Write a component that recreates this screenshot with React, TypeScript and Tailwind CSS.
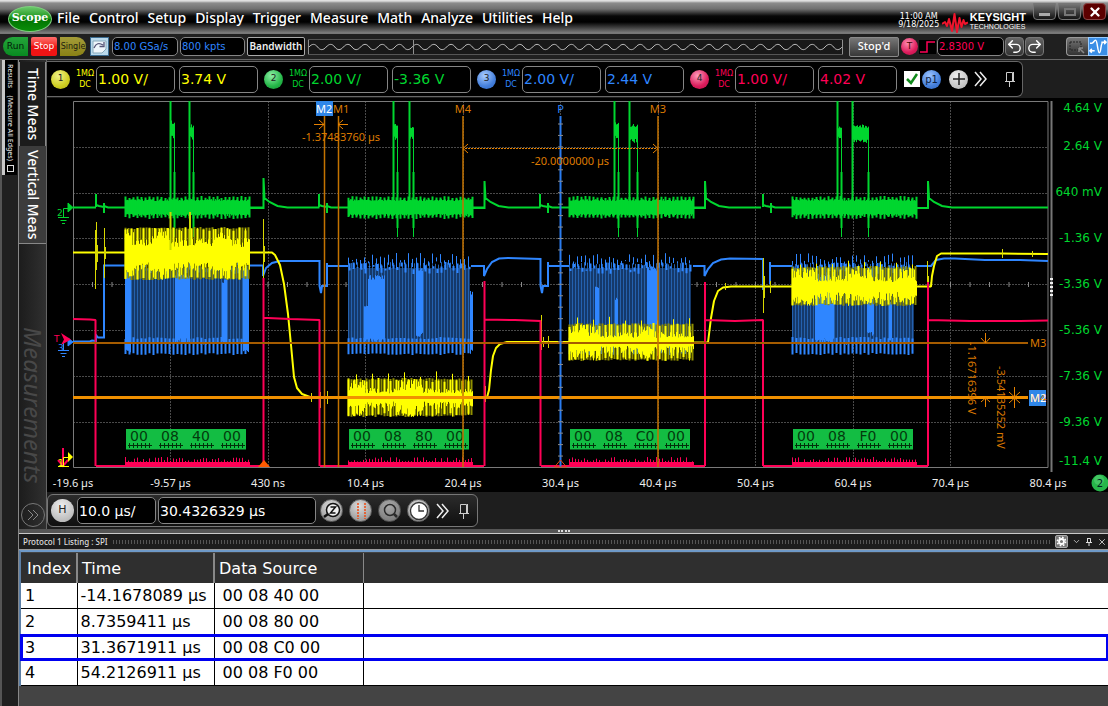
import { ChevronDown, Redo2, Undo2, X } from "lucide-react";

const MENUS = ["File", "Control", "Setup", "Display", "Trigger", "Measure", "Math", "Analyze", "Utilities", "Help"];

const CHANNELS = [
  { id: "1", scale: "1.00 V/", offset: "3.74 V", text: "text-[#ffff00]", badge: "bg-[radial-gradient(circle_at_40%_30%,#f2f28a,#cfcf22_60%,#b0b010)]" },
  { id: "2", scale: "2.00 V/", offset: "-3.36 V", text: "text-[#00d62f]", badge: "bg-[radial-gradient(circle_at_40%_30%,#8ff0a8,#25b648_60%,#119030)]" },
  { id: "3", scale: "2.00 V/", offset: "2.44 V", text: "text-[#2f86ff]", badge: "bg-[radial-gradient(circle_at_40%_30%,#a9ccff,#4580dc_60%,#2f68c4)]" },
  { id: "4", scale: "1.00 V/", offset: "4.02 V", text: "text-[#ff0056]", badge: "bg-[radial-gradient(circle_at_40%_30%,#ff9dbc,#dc1c5c_60%,#b80f48)]" },
];

const LISTING = [
  { index: 1, time: "-14.1678089 µs", data: "00 08 40 00" },
  { index: 2, time: "8.7359411 µs", data: "00 08 80 00" },
  { index: 3, time: "31.3671911 µs", data: "00 08 C0 00" },
  { index: 4, time: "54.2126911 µs", data: "00 08 F0 00" },
];

const TIMES = ["-19.6 µs", "-9.57 µs", "430 ns", "10.4 µs", "20.4 µs", "30.4 µs", "40.4 µs", "50.4 µs", "60.4 µs", "70.4 µs", "80.4 µs"];
const VOLTS = ["4.64 V", "2.64 V", "640 mV", "-1.36 V", "-3.36 V", "-5.36 V", "-7.36 V", "-9.36 V", "-11.4 V"];
const VOLT_Y = [112, 150, 196, 242, 288, 334, 380, 426, 465];

/* ---------- waveforms ---------- */

const LEFT = 73;
const RIGHT = 1048;
const TOP = 101;
const BOTTOM = 467;
const GRID_X = Array.from({ length: 11 }, (_, i) => LEFT + i * 97.5);
const GRID_Y = Array.from({ length: 9 }, (_, i) => TOP + i * 45.8);

// small fixed-seed generator so the noise is the same on each render
function noise(seed: number) {
  let s = seed;
  return () => {
    s = (s * 16807) % 2147483647;
    return s / 2147483647;
  };
}

// vertical strokes from x0 to x1, each end wandering by `jitter`
function comb(x0: number, x1: number, step: number, top: number, bottom: number, jitter: number, seed: number) {
  const rnd = noise(seed);
  rnd();
  let d = "";
  for (let x = x0; x <= x1; x += step) {
    const a = top + rnd() * jitter;
    const b = bottom - rnd() * jitter;
    d += `M${x + 0.5} ${a.toFixed(1)}V${b.toFixed(1)}`;
  }
  return d;
}

const PACKETS = [
  {
    x: 125, bytes: ["00", "08", "40", "00"], yellow: [227, 280, 238, 271],
    bright: [[125, 130], [152, 170], [215, 228]],
    bands: [[125, 130, 270, 354], [175, 189, 272, 343], [222, 226, 278, 345], [243, 248, 265, 354]],
    pulses: [[170, 4, 120, 139], [189, 4, 124, 140]],
  },
  {
    x: 348, bytes: ["00", "08", "80", "00"], yellow: [378, 417, 388, 409],
    bright: [[348, 364], [396, 422]],
    bands: [[364, 368, 305, 343], [368, 384, 275, 343], [416, 422, 268, 337], [470, 472, 290, 354]],
    pulses: [[393, 4, 122, 140], [409, 4, 124, 140]],
  },
  {
    x: 569, bytes: ["00", "08", "C0", "00"], yellow: [323, 361, 331, 353],
    bright: [[569, 598], [638, 652]],
    bands: [[595, 598, 285, 343], [615, 617, 295, 343], [647, 657, 266, 343]],
    pulses: [[614, 4, 122, 139], [629, 8, 123, 143]],
  },
  {
    x: 792, bytes: ["00", "08", "F0", "00"], yellow: [266, 306, 275, 301],
    bright: [[792, 814], [848, 872], [900, 914]],
    bands: [[815, 818, 290, 343], [818, 833, 272, 343], [867, 873, 266, 337], [889, 891, 300, 343]],
    pulses: [[837, 4, 126, 140], [852, 16, 124, 143]],
  },
];

const GREEN = PACKETS.map(({ x }) => `M${x - 29} 207V194V205L${x - 26} 206L${x - 21} 207V203V213V206L${x - 17} 207.5H${x}`).join("");
const GREEN_TAILS = [263.5, 484.5, 705, 928]
  .map((x, i) => `M${x - 15} 208H${x}V${i === 0 ? 178 : 181}L${x + 1} 198L${x + 6} 202L${x + 14} 206L${x + 24} 207.5H${i === 3 ? RIGHT : x + 56}`)
  .join("");

const BLUE_LINE = [
  "M73 341.5H90L92 340.5L96 341V335L98 337.5H104V265.5H125",
  "M249 265.5H263V276L266 268L272 263L280 261H319.5V286L321 293L322 286H327V263V266H348",
  "M471 266H484V276L487 269L492 262L499 258.5L508 258L540.5 259V286L542 293L543 286H548V262V266H569",
  "M693 266H704.5V276L708 269L713 263L721 259.5L730 258.5L763 259V290M770 284V262V266H792",
  "M916 266H928L931 266L936 260L944 258.5L955 258.5L985 260L1020 260L1048 261",
].join("");

const YELLOW_LINE = [
  "M73 252.5H125",
  "M249 252.5H272L275 255L280 265L284 284L288 314L291 345L294 377L297 388L302 394L310 397L320 398H348",
  "M471 397.5H487L489 390L491 370L493 356L496 348L500 344L507 342H569",
  "M693 342.5H708L711 318L714 301L718 291L723 287.5L731 286.5H792",
  "M916 286.5H931L932 276L934 266L937 256L941 253.5H1002L1048 254",
].join("");

// one-pixel glitches riding on the yellow trace
const YELLOW_SPIKES = [
  "M95.5 289V230M96.5 222V270M97.5 245V262M104.5 228V278M105.5 247V259",
  "M263.5 219V278M264.5 246V262M311.5 393V402M319.5 390V426M320.5 392V408M327.5 391V404",
  "M485.5 386V402M541.5 315V350M543.5 337V347M548.5 336V348",
  "M705.5 316V347M763.5 258V313M764.5 276V298M770.5 281V293",
  "M927.5 261V292M928.5 276V289M1002.5 249V258M1032.5 251V257M725.5 283V290",
].join("");

const RED_LINE = [
  "M73 319L90 319.5L95.5 320V340V466",
  "M263.5 466V278V330V318L268 318L290 319L319.5 320V466",
  "M484.5 466V281V330V319.5L515 320L540.5 321V466",
  "M705 466V282V330V320L735 321L763 320V466",
  "M928 466V282V330V320L970 321H1020L1048 320.5",
].join("");

function Packet({ packet, n }: { packet: (typeof PACKETS)[number]; n: number }) {
  const { x, yellow: y } = packet;
  const end = x + 124;
  const mid = (y[0] + y[1]) / 2;
  const seed = 97711 * (n + 1);
  return (
    <g fill="none" strokeWidth="1">
      <rect x={x} y="268" width="122" height="74" fill="#15396a" />
      <path d={comb(x, end - 2, 3, 262, 345, 3, seed)} stroke="#2461ae" />
      <path d={comb(x, end - 2, 4, 253, 270, 9, seed + 1)} stroke="#2f86ff" strokeWidth="1" />
      <path d={comb(x + 1, end - 2, 4, 262, 274, 8, seed + 6)} stroke="#2f86ff" strokeWidth="2" />
      <path d={comb(x, end - 2, 4, 337, 355, 2, seed + 2)} stroke="#2f86ff" strokeWidth="2" />
      {packet.bands.map(([a, b, t, u]) => (
        <path key={a} d={comb(a, b, 1, t, u, 5, seed + a)} stroke="#2f86ff" />
      ))}
      <path d={comb(x, end, 1, 199, 216, 2, seed + 3)} stroke="#00d62f" />
      <path d={comb(x, end, 4, 196, 219, 2, seed + 4)} stroke="#00d62f" strokeWidth="2" />
      {packet.pulses.map(([px, w, t, u]) => (
        <g key={px} stroke="#00d62f">
          <path d={`M${px + 0.5} ${TOP}V215`} strokeWidth="2" />
          <path d={comb(px, px + w, 1, t, u, 4, seed + px)} />
          <path d={`M${px + w + 0.5} 132V237`} />
          <path d={`M${px + w + 0.5} 172V228`} strokeWidth="2" />
        </g>
      ))}
      <path d={comb(x, end, 3, y[0], y[1], 2, seed + 5)} stroke="#8f8f00" strokeWidth="2" />
      <path d={comb(x, end, 6, y[0], y[1], 4, seed + 7)} stroke="#ffff00" strokeWidth="2" />
      {packet.bright.map(([a, b]) => (
        <path key={a} d={comb(a, b, 1, y[0] + 1, y[1], 12, seed + a)} stroke="#ffff00" />
      ))}
      <path d={comb(x, end, 1, y[2], y[3], 9, seed + 8)} stroke="#ffff00" />
      <path d={comb(x, end, 1, mid - 6, mid + 6, 2, seed + 11)} stroke="#ffff00" />
      <path d={comb(x + 8, end, 16, y[0] - (n ? 7 : 0), y[1], 6, seed + 9)} stroke="#ffff00" />
      <path d={comb(x, end, 1, 462, 467, 0, seed)} stroke="#ff0056" />
      <path d={comb(x, end, 3, 457, 467, 5, seed + 10)} stroke="#ff0056" />
      <rect x={x + 1} y="429" width="120" height="20.500" fill="#13bd43" />
      {packet.bytes.map((b, i) => (
        <g key={i}>
          <text x={x + 14 + i * 31} y="441" textAnchor="middle" fontSize="14" fill="#033a0d">{b}</text>
          <path d={`M${x + 3 + i * 31} 445.500h24`} stroke="#02300a" />
          <path d={comb(x + 4 + i * 31, x + 25 + i * 31, 4, 443, 448, 0, 1)} stroke="#02300a" />
        </g>
      ))}
    </g>
  );
}

function Scope() {
  return (
    <svg viewBox="47 98 1061 394" className="block w-full bg-black" fontFamily="'DejaVu Sans', Verdana, sans-serif" role="img" aria-label="Waveform display">
      <g stroke="#4a4a4a" strokeWidth="1" fill="none">
        {GRID_X.slice(1, -1).map((x) => <path key={x} d={`M${Math.floor(x) + 0.5} ${TOP}V${BOTTOM}`} strokeDasharray="2 1" />)}
        {GRID_Y.slice(1, -1).map((y) => <path key={y} d={`M${LEFT} ${Math.round(y) + 0.5}H${RIGHT}`} strokeDasharray="2 1" />)}
        <path d={`M${LEFT + 0.5} ${TOP}.5H${RIGHT}V${BOTTOM}.5H${LEFT + 0.5}Z`} stroke="#7a7a7a" />
        <path d={comb(92, 1046, 19.5, 282, 287, 0, 1)} stroke="#8a8a8a" />
      </g>
      <path d="M1051.5 101V472" stroke="#777" strokeWidth="2" />
      <path d="M1051.5 278V296" stroke="#eee" strokeWidth="3" strokeDasharray="2 2" />

      <path d={BLUE_LINE} fill="none" stroke="#2f86ff" strokeWidth="2" />
      <path d={GREEN + GREEN_TAILS} fill="none" stroke="#00d62f" strokeWidth="2" />
      <path d="M73 207.5H96M249 207.5H263M471 207.5H484M693 207.5H705M916 208H928" stroke="#00d62f" strokeWidth="2" />
      {PACKETS.map((p, i) => <Packet key={p.x} packet={p} n={i} />)}
      <path d={YELLOW_LINE} fill="none" stroke="#ffff00" strokeWidth="2" strokeLinejoin="bevel" />
      <path d={YELLOW_SPIKES} stroke="#d8d800" />
      <path d="M170.500 212V250M190 212V245" stroke="#c8d800" strokeWidth="2" />
      <path d={RED_LINE} fill="none" stroke="#ff0056" strokeWidth="2" strokeLinejoin="bevel" />
      <path d="M96 466H125M249 466H263M320 466H348M473 466H484M541 466H569M693 466H705M763 466H792M916 466H928" stroke="#ff0056" strokeWidth="2" />

      {/* cursors */}
      <g stroke="#a65c00" fill="none">
        <path d="M73 343H1028" strokeWidth="2" />
        <path d="M324.500 116V467M338.500 116V467M463 116V467M658 116V467" stroke="#c47300" strokeWidth="1.500" />
        <path d="M73 397.500H1028" stroke="#f09000" strokeWidth="3" />
      </g>
      <path d="M560.500 116V467" stroke="#2a7cf0" strokeWidth="2" />
      <path d={Array.from({ length: 30 }, (_, i) => `M558 ${124 + i * 11.45}h5`).join("")} stroke="#8a8a8a" />
      <g stroke="#e88200" fill="none" strokeWidth="1">
        <path d="M465 148.500H657" strokeDasharray="2 1" />
        <path d="M468 144L463 148.500L468 153M653 144L658 148.500L653 153" />
        <path d="M314 124.500H324M319 120L324 124.500L319 129M348 124.500H338M343 120L338 124.500L343 129" />
        <path d="M985.500 333V343M981 338L985.500 343L990 338M985.500 407V398M981 402L985.500 398L990 402" />
        <path d="M1014.500 387V408M1009 392L1014.500 397L1020 392M1009 403L1014.500 398L1020 403" />
      </g>
      <path d="M258 467L264 460L270 467Z" fill="#ff5a00" />
      <path d="M554.500 467L560.500 460L566.500 467Z" fill="none" stroke="#e04a10" />
      <rect x="316" y="101" width="17" height="15" fill="#2f86e8" />
      <rect x="1029" y="390" width="17" height="16" fill="#2f86e8" />
      <g fontFamily="'Noto Sans', 'Open Sans', sans-serif" fontSize="11" fill="#dd7a00">
        <text x="333" y="113">M1</text>
        <text x="316" y="113" fill="#fff">M2</text>
        <text x="463" y="113" textAnchor="middle">M4</text>
        <text x="658" y="113" textAnchor="middle">M3</text>
        <text x="560.500" y="113" textAnchor="middle" fill="#2f86ff">P</text>
        <text x="341" y="141" textAnchor="middle">-1.37483760 µs</text>
        <text x="570" y="165" textAnchor="middle">-20.0000000 µs</text>
        <text x="1030" y="347">M3</text>
        <text x="1030" y="402">M4</text>
        <text x="1030" y="402" fill="#fff">M2</text>
        <text transform="translate(968 342) rotate(90)">-1.16716396 V</text>
        <text transform="translate(997 366) rotate(90)">-3.54135252 mV</text>
      </g>

      {/* ground and trigger markers */}
      <g fill="none" strokeWidth="1">
        <g stroke="#00d62f">
          <path d="M63.500 217V208.500H68M58 217.500H69M60.500 220.500H66.500M62 223.500H65" />
          <path d="M68 203L73 207.500L68 212Z" fill="#00d62f" />
        </g>
        <g stroke="#2f86ff">
          <path d="M63.500 350V342M58 350.500H69M60.500 353.500H66.500M62 356.500H65" />
          <path d="M68 338L73 342L68 346Z" fill="#2f86ff" />
        </g>
        <path d="M61 333L71 339.500L61 345L64 339.500Z" fill="#ff0056" />
        <path d="M63 448V464M58 460L63 466L68 460" stroke="#ff0056" strokeWidth="2" />
        <path d="M63.500 466V457.500H68M58 466.500H69" stroke="#ffff00" />
        <path d="M68 452L73 457L68 462Z" fill="#ffff00" />
      </g>
      <g fontSize="9">
        <text x="57" y="216" fill="#00d62f">2</text>
        <text x="58" y="351" fill="#2f86ff">3</text>
        <text x="58" y="466" fill="#ffff00">1</text>
        <text x="54" y="342" fill="#ff0056">T</text>
      </g>

      {/* scales */}
      <g fontSize="11" fontFamily="'Noto Sans', 'Open Sans', sans-serif" fill="#eee">
        {TIMES.map((t, i) => (
          <text key={t} x={GRID_X[i]} y="487" textAnchor="middle">{t}</text>
        ))}
      </g>
      <g fontSize="12" fill="#00d62f">
        {VOLTS.map((v, i) => (
          <text key={v} x="1102" y={VOLT_Y[i]} textAnchor="end">{v}</text>
        ))}
      </g>
      <circle cx="1100" cy="483" r="8.500" fill="#27b64a" />
      <circle cx="1099" cy="480" r="5" fill="#5fd57c" opacity="0.500" />
      <text x="1100" y="487" fontSize="10" textAnchor="middle" fill="#022">2</text>
    </svg>
  );
}

/* ---------- small pieces ---------- */

function Field({ label, value, className }: { label: string; value: string; className: string }) {
  return (
    <input
      aria-label={label}
      defaultValue={value}
      className={`rounded-[5px] border border-[#858585] bg-black px-px outline-none ${className}`}
    />
  );
}

function More() {
  return (
    <svg viewBox="0 0 14 16" className="h-4 w-3.5" fill="none" stroke="#eee" strokeWidth="1.500">
      <path d="M1 1L7 8L1 15M6 1L12 8L6 15" />
    </svg>
  );
}

function Pin() {
  return (
    <svg viewBox="0 0 12 16" className="h-4 w-3" fill="none" stroke="#ccc">
      <path d="M2.500 1.500H8.500V10.500H2.500ZM9.500 1V10.500M1 10.500H11M5.500 11V16" />
    </svg>
  );
}

function WindowButtons() {
  const base = "flex h-[17px] w-[23px] items-center justify-center rounded-b border border-[#777] bg-linear-to-b from-[#777] to-[#161616]";
  return (
    <div className="mt-[3px] flex gap-0.5 self-start">
      <button className={base} aria-label="Minimize">
        <span className="mt-1.5 h-[3px] w-[11px] bg-[#aaa]" />
      </button>
      <button className={base} aria-label="Maximize">
        <span className="h-2 w-3 border-2 border-[#777]" />
      </button>
      <button className="flex h-[17px] w-[23px] items-center justify-center rounded border border-[#844] bg-[#5c0000] text-white" aria-label="Close">
        <X size={14} strokeWidth={4} />
      </button>
    </div>
  );
}

function TitleBar() {
  return (
    <header className="flex h-[34px] items-center border-b border-[#777] bg-[linear-gradient(#e4e4e4_0px,#dcdcdc_1px,#8c8c8c_3px,#707070_9px,#080808_16px,#000_22px,#444_28px,#8a8a8a_34px)] pr-0.5 pl-2 font-['Noto_Sans','Open_Sans',sans-serif] text-white">
      <button className="mt-1 h-[26px] w-[44px] rounded-[50%] border border-[#7fcf7f] bg-[linear-gradient(#6cc96c,#169216_48%,#027302_52%,#0a8f0a)] font-['DejaVu_Serif',serif] text-[11px] font-bold">
        Scope
      </button>
      <nav className="mt-0.5 ml-[5px] flex gap-[9px] text-[14px] font-medium">
        {MENUS.map((m) => (
          <button key={m}>{m}</button>
        ))}
      </nav>
      <div className="ml-auto flex h-full items-center">
        <div className="mt-2 w-[46px] text-center font-['DejaVu_Sans',sans-serif] text-[8px] leading-[8px]">
          11:00 AM
          <br />
          9/18/2025
        </div>
        <svg viewBox="0 0 26 22" className="mt-3 h-[22px] w-[26px]" fill="none" stroke="#f0142c" strokeWidth="2" strokeLinejoin="round">
          <path d="M0 12L3 10L5 14L7 7L10 19L12.500 2L15 20L17.500 6L19.500 15L21.500 8L23 12L26 10.500" />
        </svg>
        <div className="mt-2.5 mr-[7px] ml-0.5 font-['Liberation_Sans',Arial,sans-serif]">
          <div className="text-[11px] leading-[11px] font-bold">KEYSIGHT</div>
          <div className="text-[7px] leading-[8px]">TECHNOLOGIES</div>
        </div>
        <WindowButtons />
      </div>
    </header>
  );
}

function OverviewWave() {
  let d = "M1 8";
  for (let i = 0; i < 31; i++) d += "c3 -4 6 -4 8.600 0s5.600 4 8.600 0";
  return (
    <svg viewBox="0 0 535 16" preserveAspectRatio="none" className="h-4 w-full border-y border-[#555] bg-[#181818]" fill="none">
      <path d={d} stroke="#c8c8c8" />
      <path d="M105.500 0V16M0.500 0V16M534.500 0V16" stroke="#999" />
    </svg>
  );
}

function Toolbar() {
  return (
    <div className="flex h-[26px] items-center border-b border-[#666] bg-[#202020] pl-[3px] text-[10px]">
      <button className="h-[19px] w-[25px] rounded-l-full rounded-r-sm bg-linear-to-b from-[#23a53a] to-[#078a20] text-[9px] text-[#021a08]">Run</button>
      <button className="ml-[3px] h-[19px] w-[26px] rounded-xs bg-linear-to-b from-[#ff6c6c] via-[#f01414] to-[#f01414] text-[9px] text-white">Stop</button>
      <button className="ml-[3px] flex h-[19px] w-[26px] items-center justify-center rounded-l-sm rounded-r-full bg-linear-to-b from-[#a49c38] to-[#8a8114] text-[8px] text-[#1c1c10]">Single</button>
      <button aria-label="Auto scale" className="ml-1 flex size-[19px] items-center justify-center border border-[#3c6d92] bg-[#b9d9ec]">
        <svg viewBox="0 0 17 17" className="size-[17px]" fill="none">
          <path d="M2 3H15V11L11 15H2Z" fill="#eef6fb" stroke="#8ab" />
          <path d="M3 10Q6 3 12 7M13 4V8.500H8.500" stroke="#557" strokeWidth="1.300" />
        </svg>
      </button>
      <Field label="Sample rate" value="8.00 GSa/s" className="ml-[3px] h-[19px] w-[66px] text-[#2f86ff]" />
      <Field label="Memory depth" value="800 kpts" className="ml-0.5 h-[19px] w-[65px] text-[#2f86ff]" />
      <button className="ml-0.5 h-[19px] w-[58px] rounded-xs border border-[#aaa] bg-black font-['Noto_Sans',sans-serif] text-[10px] font-semibold text-[#eee]">Bandwidth</button>
      <div className="ml-[3px] min-w-0 flex-1">
        <OverviewWave />
      </div>
      <button className="ml-1.5 h-5 w-[50px] rounded-xs border border-[#8a8a8a] bg-linear-to-b from-[#777] to-[#383838] font-['Noto_Sans',sans-serif] text-[11px] font-medium text-white">Stop'd</button>
      <button className="ml-0.5 size-[17px] rounded-full bg-[radial-gradient(circle_at_40%_30%,#ff8fb2,#dc1c5c_60%,#b80f48)] text-[9px] text-[#400]">T</button>
      <svg viewBox="0 0 17 14" className="ml-px h-3.5 w-[17px] bg-black" fill="none" stroke="#ff0056" strokeWidth="1.500">
        <path d="M1 12H8V2H16" />
      </svg>
      <Field label="Trigger level" value="2.8300 V" className="ml-px h-[19px] w-[67px] text-[#ff0056]" />
      <button aria-label="Undo" className="ml-px flex h-[19px] w-[19px] items-center justify-center rounded-sm border border-[#777] bg-linear-to-b from-[#666] to-[#333] text-white">
        <Undo2 size={17} />
      </button>
      <button aria-label="Redo" className="ml-px flex h-[19px] w-[19px] items-center justify-center rounded-sm border border-[#777] bg-linear-to-b from-[#666] to-[#333] text-white">
        <Redo2 size={17} />
      </button>
      <button aria-label="Zoom box" className="ml-[22px] flex h-[19px] w-[22px] items-center justify-center rounded-l-sm border border-r-0 border-[#999] bg-linear-to-b from-[#777] to-[#333]">
        <svg viewBox="0 0 18 15" className="h-[15px] w-[18px]" fill="none" stroke="#222">
          <path d="M1 3H12V11H1Z" strokeDasharray="2 1" />
          <path d="M10 9L15 14M10 9V13M10 9H14" stroke="#888" strokeWidth="1.500" />
        </svg>
      </button>
      <button aria-label="Move waveform" className="flex h-[19px] w-5 items-center justify-center border border-[#9cf] bg-[#3a8ee6]">
        <svg viewBox="0 0 19 17" className="h-[17px] w-[19px]" fill="none" stroke="#fff" strokeWidth="1.600">
          <path d="M1 5H3C5 5 5 2 7 2S9 15 11 15S12 4 15 4M1 13H6M3 11L1 13L3 15M13 4H18M16 2L18 4L16 6" />
        </svg>
      </button>
    </div>
  );
}

function ChannelBar() {
  return (
    <div className="flex h-[38px] bg-[#1e1e1e]">
      <div className="mt-px flex h-9 items-center rounded-r-md border-t border-r border-b border-[#666] bg-black pl-1 text-[14px]">
        {CHANNELS.map((c) => (
          <div key={c.id} className={`flex w-[213px] items-center ${c.text}`}>
            <button className={`size-[19px] rounded-full text-[9px] text-[#222] ${c.badge}`} aria-label={`Channel ${c.id}`}>
              {c.id}
            </button>
            <div className="ml-1 w-[22px] text-center text-[8px] leading-[11px]">
              1MΩ
              <br />
              DC
            </div>
            <Field label={`Channel ${c.id} scale`} value={c.scale} className="h-[27px] w-[79px]" />
            <Field label={`Channel ${c.id} offset`} value={c.offset} className="ml-1 h-[27px] w-[79px]" />
          </div>
        ))}
        <label className="relative ml-px flex size-4 items-center justify-center bg-white">
          <input type="checkbox" defaultChecked aria-label="Enable protocol 1" className="peer size-4 appearance-none" />
          <svg viewBox="0 0 16 16" className="pointer-events-none absolute size-4 opacity-0 peer-checked:opacity-100" fill="none" stroke="#128a1c" strokeWidth="2.500">
            <path d="M3 8L7 12L13 3" />
          </svg>
        </label>
        <button className="ml-0.5 size-[19px] rounded-full bg-[radial-gradient(circle_at_40%_30%,#9cc4ff,#4580dc_60%,#2f68c4)] text-[10px] text-[#0c2040]">p1</button>
        <button aria-label="Add" className="mx-2 flex size-[19px] items-center justify-center rounded-full bg-[radial-gradient(circle_at_40%_30%,#eee,#b0b0b0)]">
          <svg viewBox="0 0 12 12" className="size-3" stroke="#222" strokeWidth="1.500">
            <path d="M6 0V12M0 6H12" />
          </svg>
        </button>
        <button aria-label="More channels" className="-ml-0.5"><More /></button>
        <button aria-label="Pin channel bar" className="mr-1.5 ml-4"><Pin /></button>
      </div>
    </div>
  );
}

function HorizontalBar() {
  const round = "flex size-[23px] items-center justify-center rounded-full border border-[#666] bg-[radial-gradient(circle_at_45%_30%,#ddd,#888)]";
  return (
    <div className="flex h-[37px] bg-[#1e1e1e] font-['DejaVu_Sans',Verdana,sans-serif] text-[14px] text-white">
      <div className="mt-0.5 flex h-[33px] items-center rounded-md border border-[#777] bg-linear-to-b from-[#2c2c2c] to-[#101010] px-[3px]">
        <button className="size-[23px] rounded-full bg-[radial-gradient(circle_at_45%_30%,#eee,#aaa)] text-[11px] text-[#222]">H</button>
        <Field label="Time per division" value="10.0 µs/" className="ml-[3px] h-[27px] w-[79px] text-white" />
        <Field label="Horizontal position" value="30.4326329 µs" className="ml-0.5 h-[27px] w-[158px] text-white" />
        <div className="ml-1 flex gap-1.5">
          <button aria-label="Zoom" className={round}>
            <svg viewBox="0 0 20 20" className="size-5" fill="none" stroke="#111" strokeWidth="1.500">
              <path d="M6 13L2 16" strokeWidth="2.500" />
              <circle cx="11" cy="9" r="6.500" fill="#eee" />
              <path d="M8.500 6H13.500L8.500 12H13.500" />
            </svg>
          </button>
          <button aria-label="Cursors" className={round}>
            <svg viewBox="0 0 20 20" className="size-5" stroke="#f04a10" strokeWidth="1.500" strokeDasharray="2 1">
              <path d="M7 2V18M14 2V18" />
            </svg>
          </button>
          <button aria-label="Search" className="flex size-[23px] items-center justify-center rounded-full border border-[#555] bg-[radial-gradient(circle_at_45%_30%,#aaa,#707070)]">
            <svg viewBox="0 0 20 20" className="size-5" fill="none" stroke="#2a2a2a" strokeWidth="1.500">
              <circle cx="10" cy="9" r="5.500" />
              <path d="M14 13L17 16" strokeWidth="2.500" />
            </svg>
          </button>
          <button aria-label="History" className={round}>
            <svg viewBox="0 0 20 20" className="size-5" fill="none" stroke="#333" strokeWidth="1.300">
              <circle cx="10" cy="10" r="8.500" fill="#fff" />
              <path d="M10 4V10H15" />
            </svg>
          </button>
        </div>
        <button aria-label="More horizontal" className="ml-1.5"><More /></button>
        <button aria-label="Pin horizontal bar" className="mr-1 ml-2"><Pin /></button>
      </div>
    </div>
  );
}

function SideTabs() {
  return (
    <aside className="flex">
      <div className="flex w-[19px] border-r border-l-2 border-r-[#888] border-l-[#555] bg-[#202020]">
        <div className="flex h-[115px] items-start border-l-[3px] border-[#c8c8c8] bg-black pr-px">
          <button className="mt-1 flex items-center gap-1 font-['Noto_Sans',sans-serif] text-[7px] leading-[11px] font-medium whitespace-pre text-[#ddd] [writing-mode:vertical-rl]">
            Results    (Measure All Edges)
            <span className="size-[7px] border border-[#ddd]" />
          </button>
        </div>
      </div>
      <div className="flex w-7 flex-col border-r border-[#666] bg-linear-to-r from-[#1c1c1c] to-[#303030] pt-0.5 font-['Noto_Sans',sans-serif] text-[14px] font-medium text-white">
        <button className="flex h-[84px] items-center justify-center border-y border-[#888] bg-[#1c1c1c] leading-[26px] [writing-mode:vertical-rl]">Time Meas</button>
        <button className="flex h-[98px] items-center justify-center border-b border-[#888] bg-[#3c3c3c] leading-[26px] [writing-mode:vertical-rl]">Vertical Meas</button>
        <div className="mt-auto self-center text-[24px] leading-[26px] font-normal text-[#484848] italic [writing-mode:vertical-rl]">Measurements</div>
        <button aria-label="Expand measurements" className="mt-5 mb-0.5 flex size-6 items-center justify-center self-center rounded-full border border-[#777]">
          <svg viewBox="0 0 12 12" className="size-3" fill="none" stroke="#888">
            <path d="M1 1L6 6L1 11M6 1L11 6L6 11" />
          </svg>
        </button>
      </div>
    </aside>
  );
}

function Listing() {
  return (
    <section className="flex flex-1">
      <div className="w-[19px] border-r border-l-2 border-r-[#888] border-l-[#555] bg-[#202020]" />
      <div className="flex flex-1 flex-col bg-[#444]">
        <div className="flex h-[5px] items-center justify-center border-b border-[#c8c8c8] bg-[#555]">
          <span className="w-3 border-t-2 border-dotted border-[#ddd]" />
        </div>
        <div className="flex h-4 items-center gap-1 border-b border-[#999] bg-[#1c1c1c] pr-px pl-1 text-[#ddd]">
          <h2 className="font-['Noto_Sans',sans-serif] text-[8px] font-medium">Protocol 1 Listing : SPI</h2>
          <div className="h-1 flex-1 bg-[radial-gradient(#555_1px,transparent_1px)] bg-size-[3px_2px]" />
          <button aria-label="Listing settings" className="flex size-[13px] items-center justify-center rounded-xs border border-[#aaa] bg-[#777]">
            <svg viewBox="0 0 12 12" className="size-[11px]" fill="none" stroke="#fff">
              <circle cx="6" cy="6" r="2.700" strokeWidth="2" />
              <circle cx="6" cy="6" r="4.500" strokeWidth="1.800" strokeDasharray="1.800 1.734" />
            </svg>
          </button>
          <button aria-label="Listing menu"><ChevronDown size={9} /></button>
          <button aria-label="Pin listing">
            <svg viewBox="0 0 8 8" className="size-2" fill="none" stroke="#ddd"><path d="M2.500 0V4.500H5.500V0.500H2M1 4.500H7M4 5V8" /></svg>
          </button>
          <button aria-label="Close listing"><X size={10} /></button>
        </div>
        <div className="border-t-2 border-l-2 border-t-[#6f9ac8] border-l-[#5c7fa6] pt-px">
          <table className="w-full table-fixed border-collapse text-left text-[16px] leading-[25px] text-black">
            <colgroup>
              <col className="w-[56px]" />
              <col className="w-[137px]" />
              <col className="w-[149px]" />
              <col />
            </colgroup>
            <thead>
              <tr className="h-[30px] bg-[#2f2f2f] text-white">
                <th className="border-r-2 border-[#888] p-0 pl-1.5 font-normal">Index</th>
                <th className="border-r-2 border-[#888] p-0 pl-1 font-normal">Time</th>
                <th className="border-r border-[#888] p-0 pl-1 font-normal">Data Source</th>
                <th className="p-0" aria-label="Empty" />
              </tr>
            </thead>
            <tbody>
              {LISTING.map((row) => (
                <tr
                  key={row.index}
                  className={row.index === 3 ? "bg-white outline-3 -outline-offset-2 outline-[#0000f0]" : "border-b border-black bg-white"}
                >
                  <td className="border-r border-black p-0 pl-1">{row.index}</td>
                  <td className="border-r border-black p-0 pl-[3px] whitespace-nowrap">{row.time}</td>
                  <td className="border-r border-black p-0 pl-2">{row.data}</td>
                  <td className="p-0" />
                </tr>
              ))}
            </tbody>
          </table>
        </div>
      </div>
    </section>
  );
}

export default function App() {
  return (
    <div className="flex min-h-screen flex-col overflow-hidden bg-[#202020] font-['DejaVu_Sans',Verdana,sans-serif]">
      <TitleBar />
      <Toolbar />
      <main className="flex">
        <SideTabs />
        <div className="min-w-0 flex-1">
          <ChannelBar />
          <Scope />
          <HorizontalBar />
        </div>
      </main>
      <Listing />
    </div>
  );
}
